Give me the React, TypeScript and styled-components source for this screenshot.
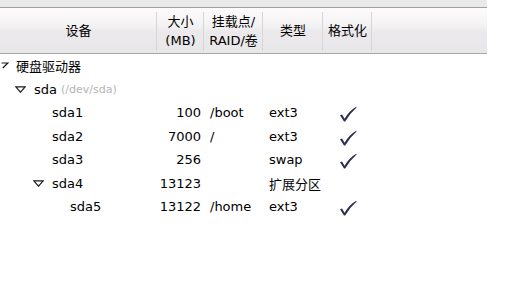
import React from "react";
import styled, { createGlobalStyle } from "styled-components";

const Global = createGlobalStyle`
  html, body { margin: 0; padding: 0; background: #ffffff; }
  body { font-family: "DejaVu Sans", "Noto Sans CJK SC", sans-serif; font-size: 13px; color: #000; }
`;

const COLS = "157px 47px 59px 60px 49px 1fr";

const Table = styled.div`
  width: 487px;
  display: flex;
  flex-direction: column;
`;

const TopStrip = styled.div`
  height: 7px;
  background: #e9e9e9;
`;

const Header = styled.div`
  display: grid;
  grid-template-columns: ${COLS};
  height: 45px;
  border-top: 1px solid #a0a0a0;
  border-bottom: 1px solid #a8a8a8;
  background: linear-gradient(#fdfbfb 0%, #f3f2f3 40%, #ebe9ec 52%, #e8e7e8 100%);
`;

const HeaderCell = styled.div<{ $last?: boolean }>`
  position: relative;
  display: flex;
  flex-direction: column;
  align-items: center;
  justify-content: center;
  font-family: "DejaVu Sans", "Noto Sans CJK SC", sans-serif;
  font-size: 13px;
  line-height: 19px;
  color: #000;
  &::after {
    content: "";
    display: ${(p) => (p.$last ? "none" : "block")};
    position: absolute;
    right: 0;
    top: 4px;
    bottom: 2px;
    width: 1px;
    background: #d6d6d6;
  }
`;

const Row = styled.div`
  display: grid;
  grid-template-columns: ${COLS};
  height: 23.5px;
  align-items: center;
`;

const DeviceCell = styled.div<{ $indent: number }>`
  display: flex;
  align-items: center;
  padding-left: ${(p) => p.$indent}px;
  overflow: hidden;
  white-space: nowrap;
`;

const Expander = styled.span<{ $slot: number; $pad?: number }>`
  display: inline-flex;
  width: ${(p) => p.$slot}px;
  margin-left: -${(p) => p.$slot}px;
  padding-left: ${(p) => p.$pad ?? 0}px;
  box-sizing: border-box;
  flex: none;
  align-items: center;
`;

const Name = styled.span``;

const Sub = styled.span`
  font-size: 11px;
  color: #b4b4b4;
  margin-left: 4px;
`;

const SizeCell = styled.div`
  text-align: right;
  padding-right: 3px;
`;

const TextCell = styled.div`
  padding-left: 6px;
  white-space: nowrap;
`;

const CheckCell = styled.div`
  display: flex;
  justify-content: center;
  padding-top: 3px;
`;

const Triangle = () => (
  <svg width="11" height="7" viewBox="0 0 11 7">
    <path d="M0.8 0.8 L10.2 0.8 L5.5 6.2 Z" fill="none" stroke="#1a1a1a" strokeWidth="1.2" strokeLinejoin="miter" />
  </svg>
);

const PartialArrow = () => (
  <svg width="8" height="7" viewBox="0 0 8 7">
    <path d="M0.5 1 L6.8 1 L1.8 6" fill="none" stroke="#1a1a1a" strokeWidth="1.2" />
  </svg>
);

const Check = () => (
  <svg width="18" height="16" viewBox="0 0 18 16">
    <path d="M1 9.2 L3 8.6 L5.6 12.8 Q10 5 17.2 0.8 L17.6 1.4 Q11.2 7 6.2 15.4 L5 15.4 Z" fill="#2a2f4e" />
  </svg>
);

type R = {
  level: number;
  name: string;
  sub?: string;
  expander?: boolean;
  size?: string;
  mount?: string;
  type?: string;
  fmt?: boolean;
};

const rows: R[] = [
  { level: 0, name: "硬盘驱动器", expander: true },
  { level: 1, name: "sda", sub: "(/dev/sda)", expander: true },
  { level: 2, name: "sda1", size: "100", mount: "/boot", type: "ext3", fmt: true },
  { level: 2, name: "sda2", size: "7000", mount: "/", type: "ext3", fmt: true },
  { level: 2, name: "sda3", size: "256", type: "swap", fmt: true },
  { level: 2, name: "sda4", size: "13123", type: "扩展分区", expander: true },
  { level: 3, name: "sda5", size: "13122", mount: "/home", type: "ext3", fmt: true },
];

export default function App() {
  return (
    <>
      <Global />
      <Table>
        <TopStrip />
        <Header>
          <HeaderCell>设备</HeaderCell>
          <HeaderCell>
            <span>大小</span>
            <span>(MB)</span>
          </HeaderCell>
          <HeaderCell>
            <span>挂载点/</span>
            <span>RAID/卷</span>
          </HeaderCell>
          <HeaderCell>类型</HeaderCell>
          <HeaderCell>格式化</HeaderCell>
          <HeaderCell $last />
        </Header>
        {rows.map((r) => (
          <Row key={r.name}>
            <DeviceCell $indent={16 + 18 * r.level}>
              {r.expander &&
                (r.level === 0 ? (
                  <Expander $slot={16} $pad={1}>
                    <PartialArrow />
                  </Expander>
                ) : (
                  <Expander $slot={19}>
                    <Triangle />
                  </Expander>
                ))}
              <Name>{r.name}</Name>
              {r.sub && <Sub>{r.sub}</Sub>}
            </DeviceCell>
            <SizeCell>{r.size}</SizeCell>
            <TextCell>{r.mount}</TextCell>
            <TextCell>{r.type}</TextCell>
            <CheckCell>{r.fmt && <Check />}</CheckCell>
            <div />
          </Row>
        ))}
      </Table>
    </>
  );
}
